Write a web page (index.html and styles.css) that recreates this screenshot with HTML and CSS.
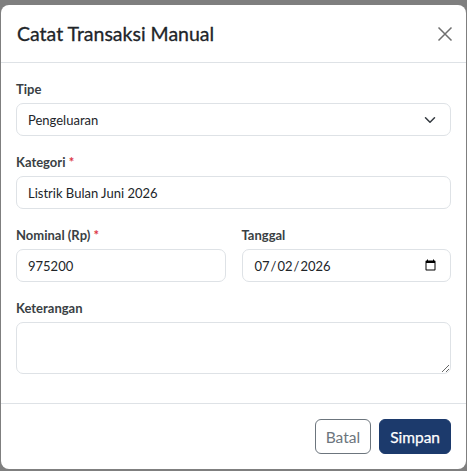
FILE: index.html
```html
<!DOCTYPE html>
<html lang="id">
<head>
<meta charset="utf-8">
<title>Catat Transaksi Manual</title>
<link rel="stylesheet" href="styles.css">
</head>
<body>
<div class="modal">
  <div class="modal-header">
    <h5 class="modal-title">Catat Transaksi Manual</h5>
    <button class="btn-close" type="button" aria-label="Close">
      <svg width="16" height="16" viewBox="0 0 16 16"><path d="M1.5 1.5 L14.5 14.5 M14.5 1.5 L1.5 14.5" stroke="#6f6f6f" stroke-width="1.5" fill="none"/></svg>
    </button>
  </div>
  <div class="modal-body">
    <div class="field">
      <label class="label">Tipe</label>
      <div class="select-wrap">
        <select class="control select"><option>Pengeluaran</option></select>
        <svg class="chevron" width="12" height="12" viewBox="0 0 16 16"><path d="M2 5l6 6 6-6" stroke="#343a40" stroke-width="2" fill="none" stroke-linecap="round" stroke-linejoin="round"/></svg>
      </div>
    </div>
    <div class="field">
      <label class="label">Kategori <span class="req">*</span></label>
      <input class="control" type="text" value="Listrik Bulan Juni 2026">
    </div>
    <div class="row">
      <div class="field">
        <label class="label">Nominal (Rp) <span class="req">*</span></label>
        <input class="control" type="text" value="975200">
      </div>
      <div class="field">
        <label class="label">Tanggal</label>
        <input class="control" type="date" value="2026-07-02">
      </div>
    </div>
    <div class="field">
      <label class="label">Keterangan</label>
      <textarea class="control textarea"></textarea>
    </div>
  </div>
  <div class="modal-footer">
    <button class="btn btn-outline" type="button">Batal</button>
    <button class="btn btn-primary" type="button">Simpan</button>
  </div>
</div>
</body>
</html>
```

FILE: styles.css
```css
* { box-sizing: border-box; }
html, body { margin: 0; height: 100%; }
body {
  background: #7f7f7f;
  padding: 5px 1px 2px 1px;
  font-family: Lato, "Liberation Sans", sans-serif;
  color: #212529;
}
.modal {
  background: #fff;
  border-radius: 8px;
  display: flex;
  flex-direction: column;
  height: 464px;
}
.modal-header {
  display: flex;
  align-items: center;
  justify-content: space-between;
  padding: 0 13px 0 16px;
  height: 58px;
  border-bottom: 1px solid #dee2e6;
}
.modal-title {
  margin: 0;
  font-size: 19.5px;
  font-weight: 400;
  color: #212529;
  -webkit-text-stroke: 0.3px #212529;
}
.btn-close {
  border: 0;
  background: none;
  padding: 0;
  width: 16px;
  height: 16px;
  display: flex;
}
.modal-body {
  padding: 16px 15px 29px 15px;
  display: flex;
  flex-direction: column;
  gap: 16px;
  border-bottom: 1px solid #dee2e6;
}
.field { display: flex; flex-direction: column; }
.row { display: grid; grid-template-columns: 1fr 1fr; gap: 16px; }
.label {
  font-size: 13px;
  font-weight: 700;
  line-height: 20px;
  margin-bottom: 4px;
  color: #3a3f44;
}
.req { color: #dc3545; }
.control {
  font-family: inherit;
  font-size: 13px;
  color: #212529;
  height: 33px;
  border: 1px solid #dee2e6;
  border-radius: 7px;
  padding: 0 11px;
  width: 100%;
  background: #fff;
  outline: none;
}
.select-wrap { position: relative; }
.select { appearance: none; -webkit-appearance: none; }
.chevron { position: absolute; right: 15px; top: 11px; pointer-events: none; }
.textarea { height: 52px; resize: vertical; padding: 6px 11px; }
.modal-footer {
  display: flex;
  justify-content: flex-end;
  gap: 8px;
  padding: 15px 15px 0 0;
}
.btn {
  font-family: inherit;
  font-size: 15.5px;
  height: 35px;
  border-radius: 6px;
  padding: 0 10px;
  cursor: pointer;
}
.btn-outline {
  background: #fff;
  border: 1px solid #6c757d;
  color: #6c757d;
}
.btn-primary {
  background: #1c3a6c;
  border: 1px solid #1c3a6c;
  color: #fff;
  font-weight: 400;
  -webkit-text-stroke: 0.25px #fff;
}
```
